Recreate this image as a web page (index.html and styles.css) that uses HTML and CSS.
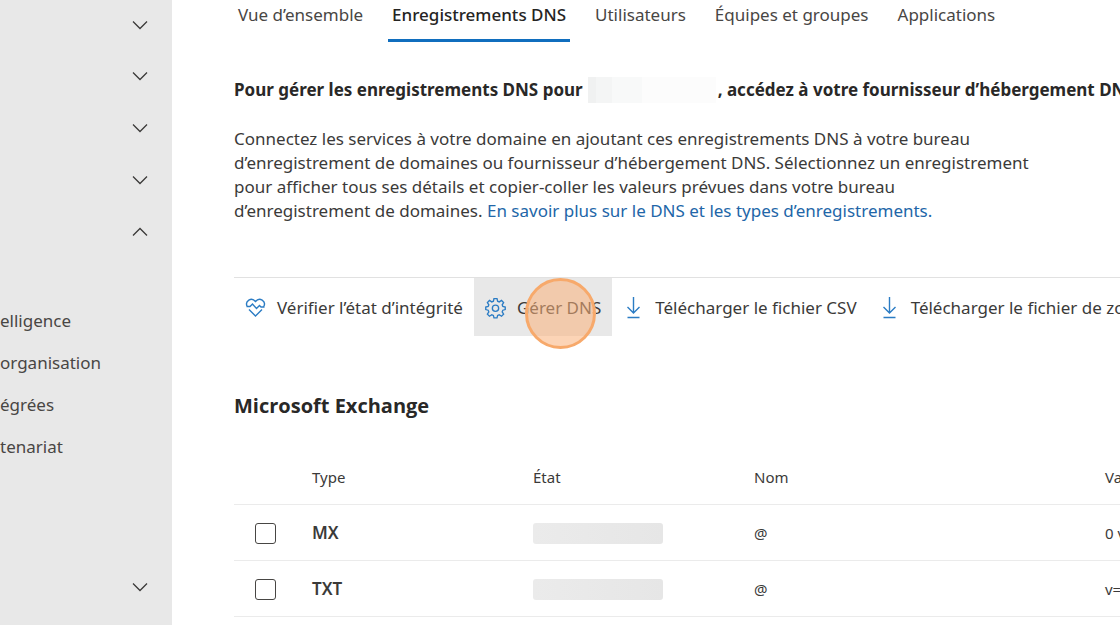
FILE: index.html
```html
<!DOCTYPE html>
<html lang="fr">

<head>
    <meta charset="UTF-8">
    <meta name="viewport" content="width=device-width, initial-scale=1.0">
    <title>Enregistrements DNS</title>
    <link rel="stylesheet" href="styles.css">
</head>

<body>
    <!-- shared icons -->
    <svg class="sprite" aria-hidden="true">
        <symbol id="chevron" viewBox="0 0 16 10">
            <path d="M1 1.5 8 8.5 15 1.5" />
        </symbol>
        <symbol id="download" viewBox="0 0 21 22">
            <path d="M10.500 0v16M4.500 10l6 6 6-6M4.500 20.500h12" />
        </symbol>
    </svg>

    <div class="layout">
        <nav class="sidebar" aria-label="Navigation">
            <button class="group" aria-label="Développer"><svg><use href="#chevron" /></svg></button>
            <button class="group" aria-label="Développer"><svg><use href="#chevron" /></svg></button>
            <button class="group" aria-label="Développer"><svg><use href="#chevron" /></svg></button>
            <button class="group" aria-label="Développer"><svg><use href="#chevron" /></svg></button>
            <button class="group open" aria-label="Réduire"><svg><use href="#chevron" /></svg></button>
            <div class="submenu">
                <a href="#">elligence</a>
                <a href="#">organisation</a>
                <a href="#">égrées</a>
                <a href="#">tenariat</a>
            </div>
            <button class="group" aria-label="Développer"><svg><use href="#chevron" /></svg></button>
        </nav>

        <main class="content">
            <div class="tabs">
                <a class="tab" href="#">Vue d’ensemble</a>
                <a class="tab active" href="#">Enregistrements DNS</a>
                <a class="tab" href="#">Utilisateurs</a>
                <a class="tab" href="#">Équipes et groupes</a>
                <a class="tab" href="#">Applications</a>
            </div>

            <h1>Pour gérer les enregistrements DNS pour<span class="masked"></span>, accédez à votre fournisseur d’hébergement DNS</h1>

            <p class="intro">
                Connectez les services à votre domaine en ajoutant ces enregistrements DNS à votre bureau<br>
                d’enregistrement de domaines ou fournisseur d’hébergement DNS. Sélectionnez un enregistrement<br>
                pour afficher tous ses détails et copier-coller les valeurs prévues dans votre bureau<br>
                d’enregistrement de domaines. <a href="#">En savoir plus sur le DNS et les types d’enregistrements.</a>
            </p>

            <div class="toolbar">
                <button class="command">
                    <svg class="icon" viewBox="0 0 21 22">
                        <path d="M2.200 9.500C-.5 4 6.500-.500 10.500 4.500 14.500-.500 21.500 4 18.800 9.500M1.500 9.500H5l2.500-2.500 4 4.500 3-3 1.500 1.500h3.500M4 12.500l6.500 6.500 6.500-6.500" />
                    </svg>
                    Vérifier l’état d’intégrité
                </button>
                <button class="command hovered">
                    <svg class="icon" viewBox="0 0 22 22">
                        <path d="M9.400 1.200h3.200l.6 2.700 1.700.7 2.400-1.500 2.200 2.200-1.500 2.400.7 1.700 2.500.6v2.600l-2.500.7-.7 1.700 1.500 2.400-2.200 2.200-2.400-1.500-1.700.7-.6 2.500H9.400l-.6-2.500-1.700-.7-2.400 1.500-2.200-2.200L4 15l-.7-1.700-2.500-.7V10l2.500-.6L4 7.700 2.500 5.300l2.200-2.200 2.400 1.500 1.700-.7z" />
                        <circle cx="11" cy="11.300" r="3.300" />
                    </svg>
                    Gérer DNS
                    <span class="pointer"></span>
                </button>
                <button class="command">
                    <svg class="icon"><use href="#download" /></svg>
                    Télécharger le fichier CSV
                </button>
                <button class="command">
                    <svg class="icon"><use href="#download" /></svg>
                    Télécharger le fichier de zone
                </button>
            </div>

            <h2>Microsoft Exchange</h2>

            <table class="records">
                <thead>
                    <tr>
                        <th class="col-check"></th>
                        <th class="col-type">Type</th>
                        <th class="col-state">État</th>
                        <th class="col-name">Nom</th>
                        <th class="col-value">Va</th>
                    </tr>
                </thead>
                <tbody>
                    <tr>
                        <td class="check"><input type="checkbox" aria-label="MX"></td>
                        <td class="type">MX</td>
                        <td><div class="shimmer"></div></td>
                        <td>@</td>
                        <td>0 v</td>
                    </tr>
                    <tr>
                        <td class="check"><input type="checkbox" aria-label="TXT"></td>
                        <td class="type">TXT</td>
                        <td><div class="shimmer"></div></td>
                        <td>@</td>
                        <td>v=</td>
                    </tr>
                </tbody>
            </table>
        </main>
    </div>
</body>

</html>
```
FILE: styles.css
```css
* {
    box-sizing: border-box;
}

body {
    margin: 0;
    font-family: "Noto Sans", "Open Sans", sans-serif;
    font-size: 17px;
    line-height: 24px;
    color: #3b3a39;
    background-color: #fff;
    overflow: hidden;
}

a {
    color: inherit;
    text-decoration: none;
}

button {
    border: 0;
    padding: 0;
    font: inherit;
    color: inherit;
    background: none;
}

svg {
    fill: none;
    stroke: currentColor;
}

.sprite {
    display: none;
}

.layout {
    display: grid;
    grid-template-columns: 172px minmax(0, 1fr);
    min-height: 100vh;
}

/* left navigation */
.sidebar {
    display: flex;
    flex-direction: column;
    background-color: #e8e8e8;
}

.group {
    display: flex;
    align-items: center;
    justify-content: flex-end;
    height: 52px;
    padding-right: 24px;
}

.group:first-child {
    height: 50px;
}

.group svg {
    width: 16px;
    height: 10px;
    stroke-width: 1.3;
}

.group.open svg {
    transform: rotate(180deg);
}

.submenu {
    display: flex;
    flex-direction: column;
    padding: 42px 0 93px;
    color: #484644;
}

.submenu a {
    line-height: 42px;
}

/* main column */
.content {
    padding-left: 62px;
    overflow: hidden;
    white-space: nowrap;
}

.tabs {
    display: flex;
    gap: 21px;
    height: 42px;
    color: #484644;
}

.tab {
    padding: 3px 4px 0;
}

.tab.active {
    font-weight: 500;
    color: #252423;
    border-bottom: 3px solid #106ebe;
}

h1,
h2 {
    color: #292827;
}

h1 {
    display: flex;
    align-items: center;
    margin: 35px 0 0;
    font-size: 17px;
    font-weight: 700;
    line-height: 26px;
    white-space: pre;
}

.masked {
    flex: none;
    width: 128px;
    height: 26px;
    margin: 0 2px 0 5px;
    background: linear-gradient(90deg, #f0f1f1 8px, #f4f5f5 8px 24px, #f8f9f9 24px 54px, #fcfcfc 54px);
}

.intro {
    margin: 24px 0 54px;
}

.intro a {
    color: #2266a8;
}

.toolbar {
    display: flex;
    border-top: 1px solid #e1e1e1;
}

.command {
    position: relative;
    display: flex;
    flex: none;
    align-items: center;
    gap: 11px;
    height: 58px;
    padding: 2px 11px 0;
}

.command.hovered {
    background-color: #e8e8e8;
}

.icon {
    width: 21px;
    height: 22px;
    color: #2b7cc4;
    stroke-width: 1.4;
}

/* click highlight */
.pointer {
    position: absolute;
    top: 0;
    left: 51px;
    width: 71px;
    height: 71px;
    border: 3px solid #f7a96b;
    border-radius: 50%;
    background-color: rgba(250, 177, 122, 0.55);
    z-index: 1;
}

h2 {
    margin: 57px 0 29px;
    font-family: "Open Sans", "Noto Sans", sans-serif;
    font-size: 20px;
    line-height: 26px;
}

.records {
    width: 100%;
    min-width: 1000px;
    table-layout: fixed;
    border-collapse: collapse;
    font-size: 15px;
}

.records th,
.records td {
    height: 56px;
    padding: 2px 0 0;
    font-weight: 400;
    text-align: left;
    border-bottom: 1px solid #ebebeb;
}

.records .type {
    font-size: 17px;
    font-weight: 600;
}

.col-check {
    width: 78px;
}

.col-type,
.col-state {
    width: 221px;
}

.col-name {
    width: 351px;
}

.check input {
    appearance: none;
    display: block;
    width: 21px;
    height: 21px;
    margin: 0 0 0 21px;
    border: 1px solid #484644;
    border-radius: 3px;
}

.shimmer {
    width: 130px;
    height: 21px;
    border-radius: 3px;
    background: linear-gradient(90deg, #ebebeb, #e6e6e6);
}
```
